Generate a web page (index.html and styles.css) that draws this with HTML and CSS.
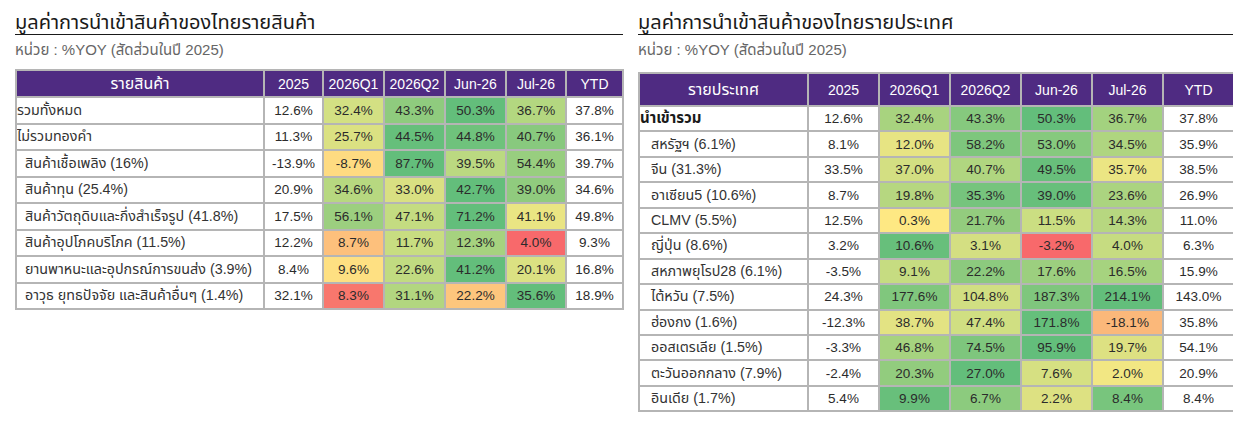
FILE: index.html
```html
<!DOCTYPE html>
<html lang="th">
<head>
<meta charset="utf-8">
<title>มูลค่าการนำเข้าสินค้าของไทย</title>
<link rel="stylesheet" href="styles.css">
</head>
<body>
<div class="page">
  <section class="panel panel-left">
    <h2 class="title">มูลค่าการนำเข้าสินค้าของไทยรายสินค้า</h2>
    <p class="unit">หน่วย : %YOY (สัดส่วนในปี 2025)</p>
    <table class="grid grid-left">
      <colgroup>
        <col class="c-label-l"><col class="c-59"><col class="c-61"><col class="c-61"><col class="c-61"><col class="c-60"><col class="c-57">
      </colgroup>
      <thead>
        <tr><th class="th-thai">รายสินค้า</th><th>2025</th><th>2026Q1</th><th>2026Q2</th><th>Jun-26</th><th>Jul-26</th><th>YTD</th></tr>
      </thead>
      <tbody>
        <tr><td class="lbl flush">รวมทั้งหมด</td><td>12.6%</td><td style="background:#d3e083">32.4%</td><td style="background:#8fcb7e">43.3%</td><td style="background:#63be7b">50.3%</td><td style="background:#b3d780">36.7%</td><td>37.8%</td></tr>
        <tr><td class="lbl flush">ไม่รวมทองคำ</td><td>11.3%</td><td style="background:#dbe182">25.7%</td><td style="background:#66bf7b">44.5%</td><td style="background:#6fc27c">44.8%</td><td style="background:#88c97e">40.7%</td><td>36.1%</td></tr>
        <tr><td class="lbl">สินค้าเชื้อเพลิง (16%)</td><td>-13.9%</td><td style="background:#fedb81">-8.7%</td><td style="background:#63be7b">87.7%</td><td style="background:#bbd981">39.5%</td><td style="background:#98ce7f">54.4%</td><td>39.7%</td></tr>
        <tr><td class="lbl">สินค้าทุน (25.4%)</td><td>20.9%</td><td style="background:#b7d880">34.6%</td><td style="background:#d9e082">33.0%</td><td style="background:#63be7b">42.7%</td><td style="background:#90cb7e">39.0%</td><td>34.6%</td></tr>
        <tr><td class="lbl">สินค้าวัตถุดิบและกึ่งสำเร็จรูป (41.8%)</td><td>17.5%</td><td style="background:#9ccf7f">56.1%</td><td style="background:#c4dc81">47.1%</td><td style="background:#63be7b">71.2%</td><td style="background:#eae583">41.1%</td><td>49.8%</td></tr>
        <tr><td class="lbl">สินค้าอุปโภคบริโภค (11.5%)</td><td>12.2%</td><td style="background:#fdc07c">8.7%</td><td style="background:#c8dd81">11.7%</td><td style="background:#a6d27f">12.3%</td><td style="background:#f8696b">4.0%</td><td>9.3%</td></tr>
        <tr><td class="lbl">ยานพาหนะและอุปกรณ์การขนส่ง (3.9%)</td><td>8.4%</td><td style="background:#fee082">9.6%</td><td style="background:#c1db81">22.6%</td><td style="background:#63be7b">41.2%</td><td style="background:#dbe182">20.1%</td><td>16.8%</td></tr>
        <tr><td class="lbl">อาวุธ ยุทธปัจจัย และสินค้าอื่นๆ (1.4%)</td><td>32.1%</td><td style="background:#f8776d">8.3%</td><td style="background:#b2d680">31.1%</td><td style="background:#fdc67d">22.2%</td><td style="background:#63be7b">35.6%</td><td>18.9%</td></tr>
      </tbody>
    </table>
  </section>

  <section class="panel panel-right">
    <h2 class="title">มูลค่าการนำเข้าสินค้าของไทยรายประเทศ</h2>
    <p class="unit">หน่วย : %YOY (สัดส่วนในปี 2025)</p>
    <table class="grid grid-right">
      <colgroup>
        <col class="c-label-r"><col class="c-71"><col class="c-71"><col class="c-71"><col class="c-71"><col class="c-71"><col class="c-71">
      </colgroup>
      <thead>
        <tr><th class="th-thai">รายประเทศ</th><th>2025</th><th>2026Q1</th><th>2026Q2</th><th>Jun-26</th><th>Jul-26</th><th>YTD</th></tr>
      </thead>
      <tbody>
        <tr><td class="lbl flush bold">นำเข้ารวม</td><td>12.6%</td><td style="background:#a8d37f">32.4%</td><td style="background:#86c97e">43.3%</td><td style="background:#63be7b">50.3%</td><td style="background:#a3d27f">36.7%</td><td>37.8%</td></tr>
        <tr><td class="lbl">สหรัฐฯ (6.1%)</td><td>8.1%</td><td style="background:#e7e483">12.0%</td><td style="background:#7ec67d">58.2%</td><td style="background:#86c97e">53.0%</td><td style="background:#afd580">34.5%</td><td>35.9%</td></tr>
        <tr><td class="lbl">จีน (31.3%)</td><td>33.5%</td><td style="background:#d3df82">37.0%</td><td style="background:#b0d680">40.7%</td><td style="background:#68bf7b">49.5%</td><td style="background:#ebe583">35.7%</td><td>38.5%</td></tr>
        <tr><td class="lbl">อาเซียน5 (10.6%)</td><td>8.7%</td><td style="background:#b6d780">19.8%</td><td style="background:#76c47d">35.3%</td><td style="background:#67bf7b">39.0%</td><td style="background:#abd480">23.6%</td><td>26.9%</td></tr>
        <tr><td class="lbl">CLMV (5.5%)</td><td>12.5%</td><td style="background:#fee883">0.3%</td><td style="background:#93cc7e">21.7%</td><td style="background:#cbde82">11.5%</td><td style="background:#b7d780">14.3%</td><td>11.0%</td></tr>
        <tr><td class="lbl">ญี่ปุ่น (8.6%)</td><td>3.2%</td><td style="background:#67bf7b">10.6%</td><td style="background:#d4df82">3.1%</td><td style="background:#f8696b">-3.2%</td><td style="background:#c6dc81">4.0%</td><td>6.3%</td></tr>
        <tr><td class="lbl">สหภาพยุโรป28 (6.1%)</td><td>-3.5%</td><td style="background:#c6dc81">9.1%</td><td style="background:#8cca7e">22.2%</td><td style="background:#9ccf7f">17.6%</td><td style="background:#a6d37f">16.5%</td><td>15.9%</td></tr>
        <tr><td class="lbl">ไต้หวัน (7.5%)</td><td>24.3%</td><td style="background:#80c77d">177.6%</td><td style="background:#d1df82">104.8%</td><td style="background:#7fc67d">187.3%</td><td style="background:#63be7b">214.1%</td><td>143.0%</td></tr>
        <tr><td class="lbl">ฮ่องกง (1.6%)</td><td>-12.3%</td><td style="background:#e3e383">38.7%</td><td style="background:#d0df82">47.4%</td><td style="background:#65bf7b">171.8%</td><td style="background:#fbb87a">-18.1%</td><td>35.8%</td></tr>
        <tr><td class="lbl">ออสเตรเลีย (1.5%)</td><td>-3.3%</td><td style="background:#a6d37f">46.8%</td><td style="background:#7ec67d">74.5%</td><td style="background:#63be7b">95.9%</td><td style="background:#dde182">19.7%</td><td>54.1%</td></tr>
        <tr><td class="lbl">ตะวันออกกลาง (7.9%)</td><td>-2.4%</td><td style="background:#92cc7e">20.3%</td><td style="background:#63be7b">27.0%</td><td style="background:#d6e082">7.6%</td><td style="background:#f2e783">2.0%</td><td>20.9%</td></tr>
        <tr><td class="lbl">อินเดีย (1.7%)</td><td>5.4%</td><td style="background:#68bf7b">9.9%</td><td style="background:#8ccb7e">6.7%</td><td style="background:#dde182">2.2%</td><td style="background:#78c57d">8.4%</td><td>8.4%</td></tr>
      </tbody>
    </table>
  </section>
</div>
</body>
</html>
```

FILE: styles.css
```css
html, body {
  margin: 0;
  padding: 0;
  background: #ffffff;
}

body {
  font-family: "Liberation Sans", "Noto Sans Thai", "Tahoma", sans-serif;
  color: #333333;
}

.page {
  display: flex;
  align-items: flex-start;
  gap: 15px;
  padding: 10px 0 0 15px;
}

.panel {
  flex-shrink: 0;
}

.panel-left {
  width: 608px;
}

.panel-right {
  width: 595px;
}

.title {
  margin: 0;
  font-size: 20px;
  font-weight: normal;
  line-height: 24px;
  color: #1a1a1a;
  border-bottom: 1.5px solid #1a1a1a;
}

.unit {
  margin: 6px 0 0;
  font-size: 15px;
  line-height: 18px;
  color: #666666;
}

.grid {
  border-collapse: collapse;
  table-layout: fixed;
  font-size: 13.5px;
}

.grid-left {
  width: 608px;
  margin-top: 10px;
}

.grid-right {
  width: 595px;
  margin-top: 13px;
}

.c-label-l { width: 248px; }
.c-label-r { width: 169px; }
.c-57 { width: 57px; }
.c-59 { width: 59px; }
.c-60 { width: 60px; }
.c-61 { width: 61px; }
.c-71 { width: 71px; }

.grid th,
.grid td {
  border: 2px solid #b5b5b5;
  padding: 0;
  text-align: center;
  white-space: nowrap;
  overflow: hidden;
}

.grid th {
  background: #4f2b82;
  color: #ffffff;
  font-weight: normal;
  font-size: 14px;
}

.grid th.th-thai {
  font-size: 16px;
}

.grid-left th { height: 25px; }
.grid-left td { height: 24.5px; }

.grid-right th { height: 31px; }
.grid-right td { height: 23.44px; }

.grid td {
  color: #2b2b2b;
}

.grid td.lbl {
  text-align: left;
  color: #333333;
  font-size: 14.3px;
}

.grid-left td.lbl { padding-left: 8px; }
.grid-right td.lbl { padding-left: 11px; }

.grid td.flush { padding-left: 0; }

.grid td.bold {
  font-weight: bold;
  color: #1a1a1a;
  font-size: 15px;
}
```
